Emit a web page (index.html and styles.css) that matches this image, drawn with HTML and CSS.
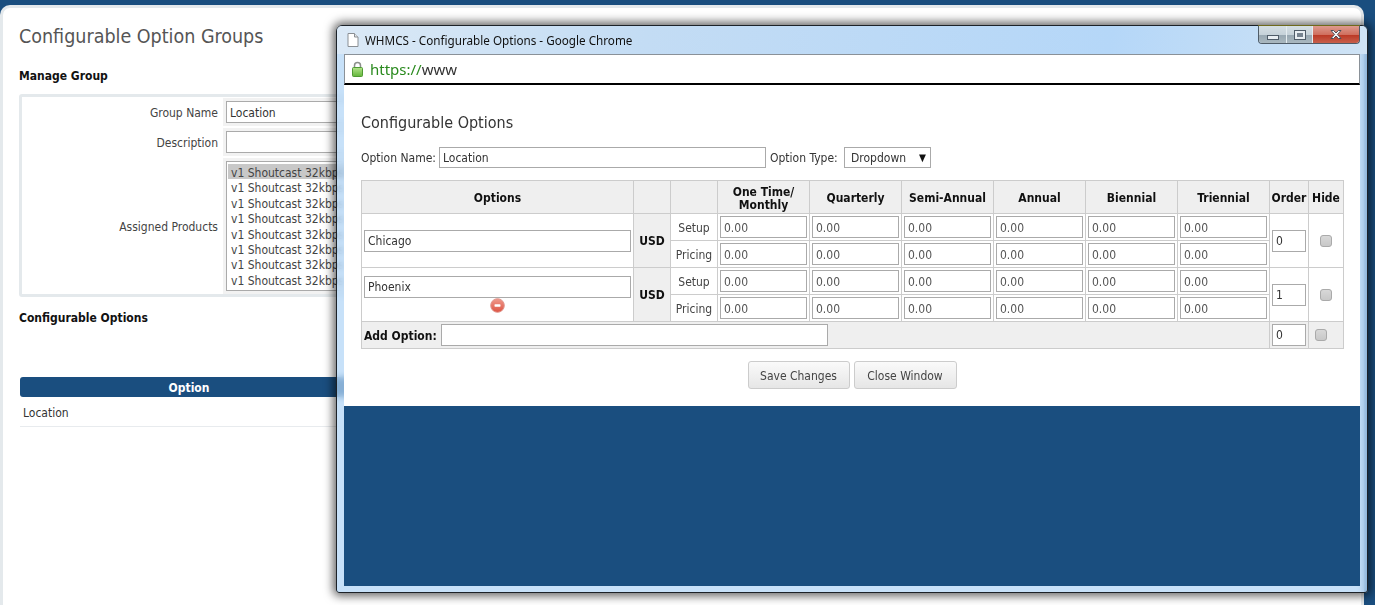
FILE: index.html
```html
<!DOCTYPE html>
<html lang="en">
<head>
    <meta charset="UTF-8">
    <title>Configurable Option Groups</title>
    <link rel="stylesheet" href="styles.css">
</head>
<body>
    <div class="card">
        <h1>Configurable Option Groups</h1>
        <h3 class="manage-title">Manage Group</h3>
        <div class="group-box">
            <div class="group-row">
                <div class="group-label">Group Name</div>
                <div class="group-field"><input type="text" class="group-input" value="Location"></div>
            </div>
            <div class="group-row">
                <div class="group-label">Description</div>
                <div class="group-field"><input type="text" class="group-input"></div>
            </div>
            <div class="group-row">
                <div class="group-label">Assigned Products</div>
                <div class="group-field">
                    <div class="listbox">
                        <div class="list-item selected">v1 Shoutcast 32kbps</div>
                        <div class="list-item">v1 Shoutcast 32kbps</div>
                        <div class="list-item">v1 Shoutcast 32kbps</div>
                        <div class="list-item">v1 Shoutcast 32kbps</div>
                        <div class="list-item">v1 Shoutcast 32kbps</div>
                        <div class="list-item">v1 Shoutcast 32kbps</div>
                        <div class="list-item">v1 Shoutcast 32kbps</div>
                        <div class="list-item">v1 Shoutcast 32kbps</div>
                    </div>
                </div>
            </div>
        </div>
        <h3 class="options-title">Configurable Options</h3>
        <div class="option-head"><div class="option-col">Option</div></div>
        <div class="option-row">Location</div>
    </div>

    <div class="popup">
        <div class="titlebar">
            <svg class="page-icon" width="12" height="14" viewBox="0 0 12 14">
                <path d="M1 .5h6.500L11 4v9.500H1z" fill="#fff" stroke="#8a8f94"/>
                <path d="M7.500.5V4H11" fill="#e4e6e8" stroke="#8a8f94"/>
            </svg>
            <span class="title-text">WHMCS - Configurable Options - Google Chrome</span>
            <div class="win-buttons">
                <div class="win-btn win-min"><span class="min-glyph"></span></div>
                <div class="win-btn win-max"><span class="max-glyph"></span></div>
                <div class="win-btn win-close">
                    <svg width="14" height="11" viewBox="0 0 14 11">
                        <path d="M2 1.500h2.600L7 4l2.400-2.500H12L8.400 5.500 12 9.500H9.400L7 7 4.600 9.500H2l3.600-4z" fill="#fff" stroke="#4a4f58" stroke-width="1"/>
                    </svg>
                </div>
            </div>
        </div>
        <div class="addressbar">
            <svg class="lock-icon" width="13" height="16" viewBox="0 0 13 16">
                <defs>
                    <linearGradient id="lockGreen" x1="0" y1="0" x2="0" y2="1">
                        <stop offset="0" stop-color="#b4e48c"/>
                        <stop offset="1" stop-color="#62b53a"/>
                    </linearGradient>
                </defs>
                <path d="M3.500 7V4.500a3 3 0 0 1 6 0V7" fill="none" stroke="#8b8f8b" stroke-width="1.500"/>
                <rect x="1.500" y="6.500" width="10" height="9" rx="1" fill="url(#lockGreen)" stroke="#4f9a33"/>
            </svg>
            <span class="url"><span class="url-https">https://</span>www</span>
        </div>
        <div class="popup-body">
            <h2>Configurable Options</h2>
            <div class="name-row">
                <span class="name-label">Option Name:</span>
                <input type="text" class="name-input" value="Location">
                <span class="type-label">Option Type:</span>
                <div class="type-select"><span>Dropdown</span><span class="select-arrow">▼</span></div>
            </div>
            <table class="options-table">
                <colgroup>
                    <col class="c-name"><col class="c-cur"><col class="c-type">
                    <col class="c-price"><col class="c-price"><col class="c-price">
                    <col class="c-price"><col class="c-price"><col class="c-price">
                    <col class="c-order"><col class="c-hide">
                </colgroup>
                <tr class="head-row">
                    <th>Options</th><th></th><th></th>
                    <th>One Time/<br>Monthly</th><th>Quarterly</th><th>Semi-Annual</th>
                    <th>Annual</th><th>Biennial</th><th>Triennial</th>
                    <th>Order</th><th>Hide</th>
                </tr>
                <tr>
                    <td rowspan="2" class="name-cell"><input type="text" class="opt-input" value="Chicago"></td>
                    <td rowspan="2" class="cur-cell">USD</td>
                    <td class="type-cell">Setup</td>
                    <td class="price-cell"><input type="text" class="price-input" value="0.00"></td>
                    <td class="price-cell"><input type="text" class="price-input" value="0.00"></td>
                    <td class="price-cell"><input type="text" class="price-input" value="0.00"></td>
                    <td class="price-cell"><input type="text" class="price-input" value="0.00"></td>
                    <td class="price-cell"><input type="text" class="price-input" value="0.00"></td>
                    <td class="price-cell"><input type="text" class="price-input" value="0.00"></td>
                    <td rowspan="2" class="order-cell"><input type="text" class="order-input" value="0"></td>
                    <td rowspan="2" class="hide-cell"><input type="checkbox" class="hide-check"></td>
                </tr>
                <tr>
                    <td class="type-cell">Pricing</td>
                    <td class="price-cell"><input type="text" class="price-input" value="0.00"></td>
                    <td class="price-cell"><input type="text" class="price-input" value="0.00"></td>
                    <td class="price-cell"><input type="text" class="price-input" value="0.00"></td>
                    <td class="price-cell"><input type="text" class="price-input" value="0.00"></td>
                    <td class="price-cell"><input type="text" class="price-input" value="0.00"></td>
                    <td class="price-cell"><input type="text" class="price-input" value="0.00"></td>
                </tr>
                <tr>
                    <td rowspan="2" class="name-cell">
                        <input type="text" class="opt-input" value="Phoenix">
                        <svg class="remove-icon" width="15" height="15" viewBox="0 0 15 15">
                            <defs>
                                <linearGradient id="removeRed" x1="0" y1="0" x2="0" y2="1">
                                    <stop offset="0" stop-color="#f09a8c"/>
                                    <stop offset="1" stop-color="#dd5443"/>
                                </linearGradient>
                            </defs>
                            <circle cx="7.500" cy="7.500" r="6.800" fill="url(#removeRed)" stroke="#e0928a"/>
                            <rect x="4.500" y="6.300" width="6" height="2.400" rx=".6" fill="#fff"/>
                        </svg>
                    </td>
                    <td rowspan="2" class="cur-cell">USD</td>
                    <td class="type-cell">Setup</td>
                    <td class="price-cell"><input type="text" class="price-input" value="0.00"></td>
                    <td class="price-cell"><input type="text" class="price-input" value="0.00"></td>
                    <td class="price-cell"><input type="text" class="price-input" value="0.00"></td>
                    <td class="price-cell"><input type="text" class="price-input" value="0.00"></td>
                    <td class="price-cell"><input type="text" class="price-input" value="0.00"></td>
                    <td class="price-cell"><input type="text" class="price-input" value="0.00"></td>
                    <td rowspan="2" class="order-cell"><input type="text" class="order-input" value="1"></td>
                    <td rowspan="2" class="hide-cell"><input type="checkbox" class="hide-check"></td>
                </tr>
                <tr>
                    <td class="type-cell">Pricing</td>
                    <td class="price-cell"><input type="text" class="price-input" value="0.00"></td>
                    <td class="price-cell"><input type="text" class="price-input" value="0.00"></td>
                    <td class="price-cell"><input type="text" class="price-input" value="0.00"></td>
                    <td class="price-cell"><input type="text" class="price-input" value="0.00"></td>
                    <td class="price-cell"><input type="text" class="price-input" value="0.00"></td>
                    <td class="price-cell"><input type="text" class="price-input" value="0.00"></td>
                </tr>
                <tr class="add-row">
                    <td colspan="9">
                        <div class="add-wrap"><b class="add-label">Add Option:</b><input type="text" class="add-input"></div>
                    </td>
                    <td class="order-cell"><input type="text" class="order-input" value="0"></td>
                    <td class="add-hide"><input type="checkbox" class="hide-check"></td>
                </tr>
            </table>
            <div class="button-row">
                <button class="btn btn-save">Save Changes</button>
                <button class="btn btn-close">Close Window</button>
            </div>
        </div>
        <div class="popup-fill"></div>
    </div>
</body>
</html>
```

FILE: styles.css
```css
* {
    box-sizing: border-box;
}
html, body {
    height: 100%;
}
body {
    margin: 0;
    padding: 5px 11px 0 0;
    background-color: #1a4e7f;
    font-family: "DejaVu Sans", sans-serif;
    font-stretch: condensed;
    font-size: 12px;
    color: #333;
    overflow: hidden;
}
input, button {
    font-stretch: condensed;
}
.card {
    height: 620px;
    background-color: #fff;
    border: 3px solid #e4e9ec;
    border-bottom: 0;
    border-radius: 10px 10px 0 0;
    padding: 0 16px;
}
h1 {
    margin: 14px 0 0;
    height: 30px;
    font-size: 19.500px;
    font-weight: 400;
    line-height: 30px;
    color: #555;
}
h3 {
    margin: 0;
    font-size: 12px;
    font-weight: 700;
    line-height: 16px;
    color: #111;
}
.manage-title {
    margin-top: 16px;
}
.group-box {
    margin-top: 10px;
    height: 203px;
    border: 3px solid #e4e9ec;
    border-radius: 3px;
    padding: 1px 0;
}
.group-row {
    display: flex;
    align-items: stretch;
    margin-bottom: 2px;
}
.group-label {
    width: 198px;
    padding: 2px 2px 0 0;
    display: flex;
    align-items: center;
    justify-content: flex-end;
    color: #444;
}
.group-field {
    flex: 1;
    margin-left: 3px;
    padding: 3px;
    background-color: #f2f2f2;
}
.group-input {
    display: block;
    width: 500px;
    height: 22px;
    padding: 2px 3px 0;
    border: 1px solid #aaa;
    font: inherit;
    color: #333;
}
.listbox {
    width: 500px;
    height: 130px;
    padding: 2px 1px;
    background-color: #fff;
    border: 1px solid #aaa;
}
.list-item {
    height: 15.400px;
    line-height: 18px;
    padding-left: 3px;
    white-space: nowrap;
    color: #444;
}
.list-item.selected {
    background-color: #c8c8c8;
}
.options-title {
    margin-top: 13px;
}
.option-head {
    margin: 51px 0 0 1px;
    height: 20px;
    background-color: #1a4e7f;
    border-radius: 3px;
}
.option-col {
    width: 338px;
    text-align: center;
    line-height: 22px;
    font-weight: 700;
    color: #fff;
}
.option-row {
    margin-left: 1px;
    height: 30px;
    padding-left: 3px;
    line-height: 33px;
    color: #333;
    border-bottom: 1px solid #e8ebee;
}

/* chrome popup window */
.popup {
    position: absolute;
    left: 336px;
    top: 25px;
    width: 1032px;
    height: 568px;
    display: flex;
    flex-direction: column;
    padding: 0 7px 6px;
    background: rgba(178, 214, 246, 0.72);
    -webkit-backdrop-filter: blur(3px);
    backdrop-filter: blur(3px);
    border: 1px solid #1c2228;
    border-radius: 6px 6px 3px 3px;
    box-shadow: 0 0 10px 3px rgba(0, 0, 0, 0.6);
}
.titlebar {
    flex: none;
    height: 28px;
    margin: 0 -7px;
    padding: 0 7px 0 10px;
    display: flex;
    align-items: center;
    background: linear-gradient(100deg, #dbe9f6 0%, #c3dcf4 30%, #b5d7f8 75%, #cfe3f5 100%);
    border-radius: 5px 5px 0 0;
}
.page-icon {
    flex: none;
}
.title-text {
    margin-left: 6px;
    flex: 1;
    font-family: "Noto Sans", sans-serif;
    font-stretch: normal;
    font-size: 11.700px;
    color: #111;
}
.win-buttons {
    align-self: flex-start;
    display: flex;
    height: 18px;
    border: 1px solid #4f5c68;
    border-top: 0;
    border-radius: 0 0 4px 4px;
    overflow: hidden;
    box-shadow: 0 -1px 0 #6f6a1c;
}
.win-btn {
    display: flex;
    align-items: center;
    justify-content: center;
    height: 100%;
}
.win-min, .win-max {
    width: 28px;
    background: linear-gradient(#d5dfe4, #c6d2d9 50%, #98a8b2 55%, #aab8bf);
    border-right: 1px solid #e4ecf0;
}
.win-max {
    width: 26px;
}
.win-close {
    flex: 1;
    width: 46px;
    background: linear-gradient(#dd9a8e, #d0705f 50%, #bb3a26 55%, #c8604c);
}
.min-glyph {
    display: block;
    width: 12px;
    height: 5px;
    margin-top: 5px;
    background-color: #e8eef2;
    border: 1px solid #4f5c68;
}
.max-glyph {
    display: block;
    width: 12px;
    height: 10px;
    background-color: #76838f;
    border: 1px solid #4f5c68;
    box-shadow: inset 0 0 0 2px #e8eef2;
}
.addressbar {
    flex: none;
    height: 31px;
    display: flex;
    align-items: center;
    padding-left: 6px;
    background-color: #fff;
    border: 1px solid #8a9198;
    border-bottom: 2px solid #000;
}
.lock-icon {
    flex: none;
}
.url {
    margin-left: 6px;
    font-family: "Noto Sans", sans-serif;
    font-stretch: normal;
    font-size: 15px;
    color: #333;
}
.url-https {
    color: #2a8a1e;
}
.popup-body {
    flex: none;
    height: 321px;
    padding: 27px 17px 0;
    background-color: #fff;
}
h2 {
    margin: 0;
    height: 22px;
    font-size: 16px;
    font-weight: 400;
    line-height: 22px;
    color: #333;
}
.name-row {
    margin-top: 13px;
    display: flex;
    align-items: center;
    gap: 4px;
    height: 21px;
}
.name-label {
    width: 74px;
    white-space: nowrap;
}
.type-label {
    width: 70px;
    white-space: nowrap;
}
.name-input {
    width: 327px;
    height: 21px;
    padding: 1px 3px 0;
    border: 1px solid #aaa;
    font: inherit;
    color: #333;
}
.type-select {
    width: 87px;
    height: 21px;
    padding: 0 4px 0 6px;
    display: flex;
    align-items: center;
    justify-content: space-between;
    border: 1px solid #aaa;
    background-color: #fff;
}
.select-arrow {
    font-size: 10px;
    color: #111;
}
.options-table {
    margin-top: 12px;
    width: 983px;
    table-layout: fixed;
    border-collapse: collapse;
}
.c-name { width: 272px; }
.c-cur { width: 37px; }
.c-type { width: 47px; }
.c-price { width: 92px; }
.c-order { width: 39px; }
.c-hide { width: 35px; }
.options-table th, .options-table td {
    border: 1px solid #ccc;
    padding: 0;
    height: 27px;
}
.options-table th {
    height: 33px;
    padding-top: 3px;
    background-color: #efefef;
    font-weight: 700;
    line-height: 13px;
    color: #111;
}
.options-table .name-cell {
    padding: 0 2px;
    text-align: center;
}
.opt-input {
    display: block;
    width: 267px;
    height: 22px;
    padding: 0 3px;
    border: 1px solid #aaa;
    font: inherit;
    color: #333;
}
.remove-icon {
    display: block;
    margin: 0 auto;
}
.cur-cell {
    background-color: #efefef;
    text-align: center;
    font-weight: 700;
    color: #111;
}
.options-table .type-cell {
    padding-top: 1px;
    text-align: center;
    color: #444;
}
.options-table .price-cell {
    padding: 0 2px;
}
.price-input {
    display: block;
    width: 87px;
    height: 22px;
    padding: 1px 3px 0;
    border: 1px solid #aaa;
    font: inherit;
    color: #555;
}
.options-table .order-cell {
    padding: 0 2px;
}
.order-input {
    display: block;
    width: 34px;
    height: 22px;
    padding: 0 3px;
    border: 1px solid #aaa;
    font: inherit;
    color: #333;
}
.hide-cell {
    text-align: center;
}
.hide-check {
    -webkit-appearance: none;
    appearance: none;
    display: block;
    width: 12px;
    height: 12px;
    margin: 0 auto;
    background: linear-gradient(#d8d8d8, #c8c8c8);
    border: 1px solid #aaa;
    border-radius: 3px;
}
.add-row td {
    background-color: #efefef;
}
.add-wrap {
    display: flex;
    align-items: center;
    gap: 4px;
    padding-left: 2px;
    color: #111;
}
.add-label {
    padding-top: 2px;
}
.add-input {
    width: 387px;
    height: 22px;
    border: 1px solid #aaa;
    font: inherit;
}
.add-row .add-hide {
    padding-left: 6px;
}
.add-hide .hide-check {
    margin: 0;
}
.button-row {
    margin-top: 12px;
    display: flex;
    justify-content: center;
    gap: 4px;
}
.btn {
    height: 28px;
    padding: 2px 4px 0;
    background: linear-gradient(#fafafa, #e6e6e6);
    border: 1px solid #ccc;
    border-radius: 3px;
    font: inherit;
    color: #444;
}
.btn-save {
    width: 102px;
}
.btn-close {
    width: 103px;
}
.popup-fill {
    flex: 1;
    background-color: #1a4e7f;
}
```
